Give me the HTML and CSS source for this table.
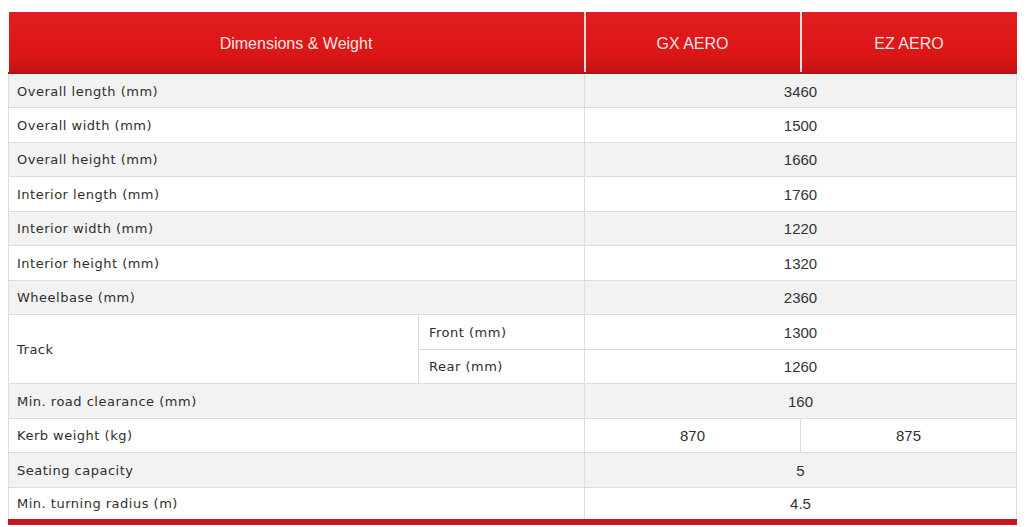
FILE: index.html
```html
<!DOCTYPE html>
<html>
<head>
<meta charset="utf-8">
<link rel="stylesheet" href="styles.css">
</head>
<body>
<table class="spec">
  <colgroup>
    <col class="c-label">
    <col class="c-sub">
    <col class="c-val">
    <col class="c-val">
  </colgroup>
  <thead>
    <tr>
      <th colspan="2">Dimensions &amp; Weight</th>
      <th>GX AERO</th>
      <th>EZ AERO</th>
    </tr>
  </thead>
  <tbody>
    <tr class="alt"><td class="lbl" colspan="2">Overall length (mm)</td><td colspan="2">3460</td></tr>
    <tr><td class="lbl" colspan="2">Overall width (mm)</td><td colspan="2">1500</td></tr>
    <tr class="alt"><td class="lbl" colspan="2">Overall height (mm)</td><td colspan="2">1660</td></tr>
    <tr><td class="lbl" colspan="2">Interior length (mm)</td><td colspan="2">1760</td></tr>
    <tr class="alt"><td class="lbl" colspan="2">Interior width (mm)</td><td colspan="2">1220</td></tr>
    <tr><td class="lbl" colspan="2">Interior height (mm)</td><td colspan="2">1320</td></tr>
    <tr class="alt"><td class="lbl" colspan="2">Wheelbase (mm)</td><td colspan="2">2360</td></tr>
    <tr><td class="lbl" rowspan="2">Track</td><td class="lbl sub">Front (mm)</td><td colspan="2">1300</td></tr>
    <tr><td class="lbl sub">Rear (mm)</td><td colspan="2">1260</td></tr>
    <tr class="alt"><td class="lbl" colspan="2">Min. road clearance (mm)</td><td colspan="2">160</td></tr>
    <tr><td class="lbl" colspan="2">Kerb weight (kg)</td><td>870</td><td>875</td></tr>
    <tr class="alt"><td class="lbl" colspan="2">Seating capacity</td><td colspan="2">5</td></tr>
    <tr><td class="lbl" colspan="2">Min. turning radius (m)</td><td colspan="2">4.5</td></tr>
  </tbody>
</table>
</body>
</html>
```
FILE: styles.css
```css
html, body {
  margin: 0;
  padding: 0;
  background: #ffffff;
}
body {
  padding: 12px 13px 0 8px;
}
.spec {
  width: 1008px;
  border-collapse: collapse;
  table-layout: fixed;
  border-bottom: 6px solid #c8161c;
}
.c-label { width: 410px; }
.c-sub { width: 166px; }
.c-val { width: 216px; }
.spec th {
  height: 61px;
  padding: 4px 0 0;
  background: linear-gradient(#e11d1d, #dc1616 70%, #c51313);
  border-bottom: 2px solid #b51212;
  border-left: 2px solid #f4dede;
  color: #fbe3e3;
  font: 16px "Liberation Sans", Arial, sans-serif;
  font-weight: normal;
  text-align: center;
  box-sizing: border-box;
}
.spec th:first-child {
  border-left: none;
}
.spec td {
  height: 34.5px;
  padding: 1px 0 0;
  box-sizing: border-box;
  border: 1px solid #dcdcdc;
  text-align: center;
  color: #333333;
  font: 15px "Liberation Sans", Arial, sans-serif;
}
.spec td.lbl {
  text-align: left;
  padding-left: 8px;
  font: 13px "DejaVu Sans", Verdana, sans-serif;
  letter-spacing: 0.5px;
  color: #2e2e2e;
}
.spec td.lbl.sub {
  padding-left: 10px;
}
.spec tr.alt td {
  background: #f2f2f2;
}
```
